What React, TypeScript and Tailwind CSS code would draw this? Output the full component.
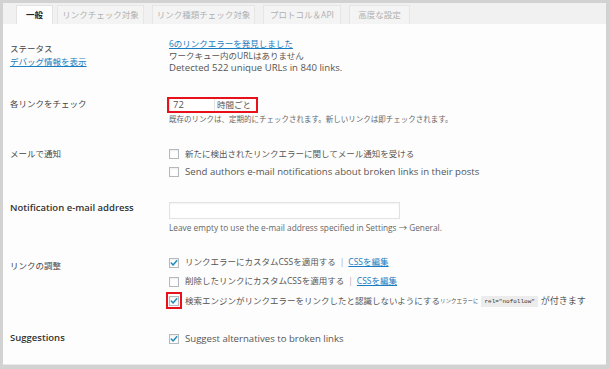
import React from "react";

const Box = ({ checked }: { checked?: boolean }) => (
  <span className="w-[10px] h-[10px] border border-[#b4b9be] bg-white shadow-[inset_0_1px_2px_rgba(0,0,0,0.08)] flex items-center justify-center shrink-0">
    {checked && (
      <svg width="8" height="8" viewBox="0 0 8 8">
        <path d="M1.3 4.1 L3.1 6 L6.7 1.7" stroke="#1e8cbe" strokeWidth="1.5" fill="none" strokeLinecap="round" strokeLinejoin="round" />
      </svg>
    )}
  </span>
);

const Tab = ({ label, w, ml, active }: { label: string; w: string; ml: string; active?: boolean }) => (
  <div
    className={
      "h-[19px] border border-b-0 flex items-center justify-center text-[8.5px] leading-none " +
      w +
      " " +
      ml +
      (active ? " bg-[#fdfdfd] border-[#e3e3e3] text-[#222] font-bold" : " bg-[#f4f4f4] border-[#e6e6e6] text-[#b0b0b0]")
    }
  >
    {label}
  </div>
);

export default function App() {
  return (
    <div className="w-[610px] h-[369px] bg-[#d2d2d2] pt-[3px] pl-[3px] pr-[4px] pb-[4px] flex flex-col font-['Open_Sans','Noto_Sans_CJK_JP',sans-serif] text-[#555]">
      <div className="h-[21px] bg-[#f1f1f1] flex items-end shrink-0">
        <Tab label="一般" w="w-[37px]" ml="ml-[13px]" active />
        <Tab label="リンクチェック対象" w="w-[87px]" ml="ml-[4px]" />
        <Tab label="リンク種類チェック対象" w="w-[103px]" ml="ml-[8px]" />
        <Tab label="プロトコル＆API" w="w-[78px]" ml="ml-[8px]" />
        <Tab label="高度な設定" w="w-[61px]" ml="ml-[8px]" />
      </div>
      <div className="flex-1 bg-[#fdfdfd] border-b border-[#e9e9e9] flex flex-col">
        {/* Status */}
        <div className="flex pt-[14px]">
          <div className="w-[166px] pl-[7px] pt-[4px] text-[8.5px] leading-[13px] text-[#444]">
            <div>ステータス</div>
            <div className="text-[#1a7cc0] underline">デバッグ情報を表示</div>
          </div>
          <div className="text-[8.5px] leading-[12px]">
            <div className="text-[#1a7cc0] underline">6のリンクエラーを発見しました</div>
            <div>ワークキュー内のURLはありません</div>
            <div className="text-[9.6px]">Detected 522 unique URLs in 840 links.</div>
          </div>
        </div>
        {/* Check each link */}
        <div className="flex mt-[23px]">
          <div className="w-[166px] pl-[7px] text-[8.5px] leading-[12px] pt-[1px] text-[#444]">各リンクをチェック</div>
          <div className="flex flex-col">
            <div className="relative flex items-center h-[16px]">
              <div className="w-[46px] h-[14px] border border-[#e4e4e4] bg-white text-[9.5px] leading-[12px] pl-[3px]">72</div>
              <span className="ml-[2px] text-[8.5px] leading-none">時間ごと</span>
              <div className="absolute left-[-2px] top-0 w-[91px] h-[16px] border-2 border-[#e8101a]" />
            </div>
            <div className="mt-[1px] text-[7.5px] leading-[10px] text-[#666]">既存のリンクは、定期的にチェックされます。新しいリンクは即チェックされます。</div>
          </div>
        </div>
        {/* Email notify */}
        <div className="flex mt-[21px]">
          <div className="w-[166px] pl-[7px] pt-[3px] text-[8.5px] leading-[12px] text-[#444]">メールで通知</div>
          <div className="flex flex-col">
            <div className="h-[18px] flex items-center gap-[6px] text-[8.5px]">
              <Box />
              <span>新たに検出されたリンクエラーに関してメール通知を受ける</span>
            </div>
            <div className="h-[18px] flex items-center gap-[6px] text-[9.6px]">
              <Box />
              <span>Send authors e-mail notifications about broken links in their posts</span>
            </div>
          </div>
        </div>
        {/* Notification e-mail address */}
        <div className="flex mt-[21px]">
          <div className="w-[166px] pl-[7px] text-[9.5px] leading-[12px] font-semibold text-[#333]">Notification e-mail address</div>
          <div className="flex flex-col">
            <div className="w-[231px] h-[17px] border border-[#e2e2e2] bg-white shadow-[inset_0_1px_2px_rgba(0,0,0,0.05)]" />
            <div className="mt-[4px] text-[8.3px] leading-[10px] text-[#666]">Leave empty to use the e-mail address specified in Settings → General.</div>
          </div>
        </div>
        {/* Link tweaks */}
        <div className="flex mt-[20px]">
          <div className="w-[166px] pl-[7px] pt-[7px] text-[8.5px] leading-[12px] text-[#444]">リンクの調整</div>
          <div className="flex flex-col text-[8.5px]">
            <div className="h-[19px] flex items-center gap-[6px]">
              <Box checked />
              <span>
                リンクエラーにカスタムCSSを適用する<span className="text-[#aaa] mx-[4px]">|</span>
                <span className="text-[#1a7cc0] underline">CSSを編集</span>
              </span>
            </div>
            <div className="h-[19px] flex items-center gap-[6px]">
              <Box />
              <span>
                削除したリンクにカスタムCSSを適用する<span className="text-[#aaa] mx-[4px]">|</span>
                <span className="text-[#1a7cc0] underline">CSSを編集</span>
              </span>
            </div>
            <div className="h-[20px] flex items-center gap-[6px]">
              <span className="relative flex">
                <Box checked />
                <span className="absolute left-[-3px] top-[-4px] w-[16px] h-[17px] border-2 border-[#e8101a]" />
              </span>
              <span className="flex items-center whitespace-nowrap">
                検索エンジンがリンクエラーをリンクしたと認識しないようにする
                <span className="text-[5.5px]">リンクエラーに</span>
                <code className="mx-[3px] px-[3px] h-[11px] flex items-center bg-[#ececec] text-[6px] font-['Liberation_Mono','DejaVu_Sans_Mono',monospace] text-[#333]">rel="nofollow"</code>
                <span className="text-[9px]">が付きます</span>
              </span>
            </div>
          </div>
        </div>
        {/* Suggestions */}
        <div className="flex mt-[19px]">
          <div className="w-[166px] pl-[7px] pt-[2px] text-[9.5px] leading-[12px] font-semibold text-[#333]">Suggestions</div>
          <div className="h-[18px] flex items-center gap-[6px] text-[9.6px]">
            <Box checked />
            <span>Suggest alternatives to broken links</span>
          </div>
        </div>
      </div>
    </div>
  );
}
